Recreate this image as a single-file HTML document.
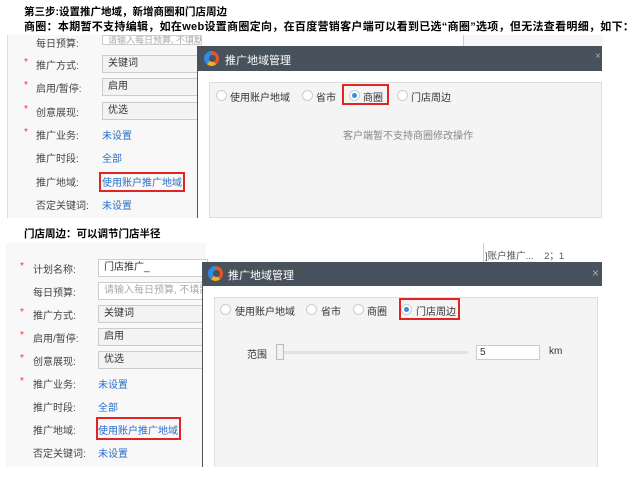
<!DOCTYPE html>
<html><head><meta charset="utf-8"><style>
*{margin:0;padding:0;box-sizing:border-box}
body{width:638px;height:489px;background:#fff;position:relative;overflow:hidden;font-family:"Liberation Sans","Noto Sans CJK SC",sans-serif;font-size:10px;color:#333}
.a{position:absolute;white-space:nowrap}
.t{font-weight:bold;color:#000;font-size:10.5px}
.lbl{color:#444}
.star{color:#e33}
.lnk{color:#2a6fc9}
.inp{position:absolute;height:18px;border:1px solid #ccc;background:#f3f3f3;padding-left:5px;line-height:16px;color:#333;overflow:hidden;white-space:nowrap}
.inp.w{background:#fff;color:#aaa}
.hd{position:absolute;background:#47525c;color:#fff}
.rad{position:absolute;width:11px;height:11px;border:1px solid #ccc;border-radius:50%;background:#fff}
.rad.on::after{content:"";position:absolute;left:2px;top:2px;width:5px;height:5px;border-radius:50%;background:#2e8ee6}
.red{position:absolute;border:2px solid #e02525}
.logo{position:absolute;width:15px;height:15px;border-radius:50%;background:conic-gradient(#e8542a 0 40%,#f6b21b 40% 60%,#2f8be6 60% 100%)}
.logo::after{content:"";position:absolute;left:5px;top:4px;width:7px;height:7px;border-radius:50%;background:#47525c}
</style></head><body>
<div class="a t" style="left:24px;top:4px">第三步:设置推广地域，新增商圈和门店周边</div>
<div class="a t" style="left:24px;top:18px;font-size:11px;letter-spacing:0.3px">商圈：本期暂不支持编辑，如在web设置商圈定向，在百度营销客户端可以看到已选“商圈”选项，但无法查看明细，如下：</div>

<div class="a" style="left:7px;top:35px;width:195px;height:183px;background:#f8f8f8;border-left:1px solid #ddd"></div>
<div class="a" style="left:463px;top:35px;width:140px;height:11px;background:#f6f6f6;border-left:1px solid #ccc"></div>
<div class="inp w" style="left:102px;top:35px;width:100px;height:10px;font-size:9px;line-height:8px">请输入每日预算, 不填默认为不限定</div>
<div class="a lbl" style="left:36px;top:35px">每日预算:</div>
<div class="a star" style="left:24px;top:57px">*</div><div class="a lbl" style="left:36px;top:57px">推广方式:</div><div class="inp" style="left:102px;top:55px;width:100px">关键词</div>
<div class="a star" style="left:24px;top:80px">*</div><div class="a lbl" style="left:36px;top:80px">启用/暂停:</div><div class="inp" style="left:102px;top:78px;width:100px">启用</div>
<div class="a star" style="left:24px;top:104px">*</div><div class="a lbl" style="left:36px;top:104px">创意展现:</div><div class="inp" style="left:102px;top:102px;width:100px">优选</div>
<div class="a star" style="left:24px;top:127px">*</div><div class="a lbl" style="left:36px;top:127px">推广业务:</div><div class="a lnk" style="left:102px;top:127px">未设置</div>
<div class="a lbl" style="left:36px;top:150px">推广时段:</div><div class="a lnk" style="left:102px;top:150px">全部</div>
<div class="a lbl" style="left:36px;top:174px">推广地域:</div><div class="a lnk" style="left:102px;top:174px">使用账户推广地域</div>
<div class="red" style="left:99px;top:172px;width:86px;height:20px"></div>
<div class="a lbl" style="left:36px;top:197px">否定关键词:</div><div class="a lnk" style="left:102px;top:197px">未设置</div>

<div class="a" style="left:197px;top:46px;width:405px;height:172px;background:#fff;border-left:1px solid #555"></div>
<div class="hd" style="left:197px;top:46px;width:405px;height:25px"></div>
<div class="logo" style="left:204px;top:51px"></div>
<div class="a" style="left:225px;top:52px;color:#fff;font-size:11px">推广地域管理</div>
<div class="a" style="left:595px;top:51px;color:#aaa">×</div>
<div class="a" style="left:209px;top:82px;width:393px;height:136px;background:#f4f4f4;border:1px solid #ddd"></div>
<div class="rad" style="left:216px;top:90px"></div><div class="a" style="left:230px;top:89px">使用账户地域</div>
<div class="rad" style="left:302px;top:90px"></div><div class="a" style="left:316px;top:89px">省市</div>
<div class="rad on" style="left:349px;top:90px"></div><div class="a" style="left:363px;top:89px">商圈</div>
<div class="red" style="left:342px;top:84px;width:47px;height:21px"></div>
<div class="rad" style="left:397px;top:90px"></div><div class="a" style="left:411px;top:89px">门店周边</div>
<div class="a" style="left:343px;top:127px;color:#888">客户端暂不支持商圈修改操作</div>

<div class="a t" style="left:24px;top:226px">门店周边：可以调节门店半径</div>

<div class="a" style="left:6px;top:243px;width:200px;height:224px;background:#f8f8f8"></div>
<div class="a" style="left:483px;top:243px;width:119px;height:19px;background:#fff;border-left:1px solid #ccc"></div>
<div class="a" style="left:485px;top:248px;font-size:9.5px;color:#555">]账户推广...&nbsp;&nbsp;&nbsp; 2；1</div>
<div class="a star" style="left:20px;top:261px">*</div><div class="a lbl" style="left:33px;top:261px">计划名称:</div><div class="inp" style="left:98px;top:259px;width:110px;background:#fff">门店推广_</div>
<div class="a lbl" style="left:33px;top:284px">每日预算:</div><div class="inp w" style="left:98px;top:282px;width:110px">请输入每日预算, 不填默</div>
<div class="a star" style="left:20px;top:307px">*</div><div class="a lbl" style="left:33px;top:307px">推广方式:</div><div class="inp" style="left:98px;top:305px;width:110px">关键词</div>
<div class="a star" style="left:20px;top:330px">*</div><div class="a lbl" style="left:33px;top:330px">启用/暂停:</div><div class="inp" style="left:98px;top:328px;width:110px">启用</div>
<div class="a star" style="left:20px;top:353px">*</div><div class="a lbl" style="left:33px;top:353px">创意展现:</div><div class="inp" style="left:98px;top:351px;width:110px">优选</div>
<div class="a star" style="left:20px;top:376px">*</div><div class="a lbl" style="left:33px;top:376px">推广业务:</div><div class="a lnk" style="left:98px;top:376px">未设置</div>
<div class="a lbl" style="left:33px;top:399px">推广时段:</div><div class="a lnk" style="left:98px;top:399px">全部</div>
<div class="a lbl" style="left:33px;top:422px">推广地域:</div><div class="a lnk" style="left:98px;top:422px">使用账户推广地域</div>
<div class="red" style="left:96px;top:417px;width:85px;height:23px"></div>
<div class="a lbl" style="left:33px;top:445px">否定关键词:</div><div class="a lnk" style="left:98px;top:445px">未设置</div>

<div class="a" style="left:202px;top:262px;width:400px;height:205px;background:#fff;border-left:1px solid #555"></div>
<div class="hd" style="left:202px;top:262px;width:400px;height:24px"></div>
<div class="logo" style="left:208px;top:266px"></div>
<div class="a" style="left:228px;top:267px;color:#fff;font-size:11px">推广地域管理</div>
<div class="a" style="left:592px;top:266px;color:#aaa;font-size:12px">×</div>
<div class="a" style="left:214px;top:297px;width:384px;height:170px;background:#f4f4f4;border:1px solid #ddd;border-bottom:none"></div>
<div class="rad" style="left:220px;top:304px"></div><div class="a" style="left:235px;top:303px">使用账户地域</div>
<div class="rad" style="left:306px;top:304px"></div><div class="a" style="left:321px;top:303px">省市</div>
<div class="rad" style="left:353px;top:304px"></div><div class="a" style="left:367px;top:303px">商圈</div>
<div class="rad on" style="left:401px;top:304px"></div><div class="a" style="left:416px;top:303px">门店周边</div>
<div class="red" style="left:399px;top:298px;width:61px;height:22px"></div>
<div class="a" style="left:247px;top:346px">范围</div>
<div class="a" style="left:280px;top:351px;width:188px;height:3px;background:#e2e2e2"></div>
<div class="a" style="left:276px;top:344px;width:8px;height:16px;border:1px solid #bbb;background:#f3f3f3"></div>
<div class="a" style="left:476px;top:345px;width:64px;height:15px;border:1px solid #ccc;background:#fff;padding-left:3px;line-height:13px">5</div>
<div class="a" style="left:549px;top:346px">km</div>
</body></html>
